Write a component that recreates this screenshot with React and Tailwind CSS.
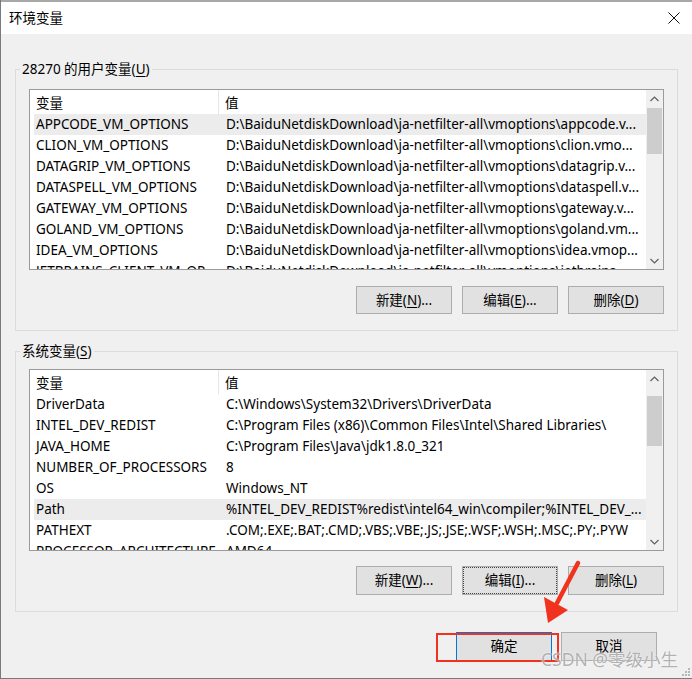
import React from "react";

const userRows = [
  ["APPCODE_VM_OPTIONS", "D:\\BaiduNetdiskDownload\\ja-netfilter-all\\vmoptions\\appcode.v...", true],
  ["CLION_VM_OPTIONS", "D:\\BaiduNetdiskDownload\\ja-netfilter-all\\vmoptions\\clion.vmo..."],
  ["DATAGRIP_VM_OPTIONS", "D:\\BaiduNetdiskDownload\\ja-netfilter-all\\vmoptions\\datagrip.v..."],
  ["DATASPELL_VM_OPTIONS", "D:\\BaiduNetdiskDownload\\ja-netfilter-all\\vmoptions\\dataspell.v..."],
  ["GATEWAY_VM_OPTIONS", "D:\\BaiduNetdiskDownload\\ja-netfilter-all\\vmoptions\\gateway.v..."],
  ["GOLAND_VM_OPTIONS", "D:\\BaiduNetdiskDownload\\ja-netfilter-all\\vmoptions\\goland.vm..."],
  ["IDEA_VM_OPTIONS", "D:\\BaiduNetdiskDownload\\ja-netfilter-all\\vmoptions\\idea.vmop..."],
  ["JETBRAINS_CLIENT_VM_OP...", "D:\\BaiduNetdiskDownload\\ja-netfilter-all\\vmoptions\\jetbrains..."],
];

const sysRows = [
  ["DriverData", "C:\\Windows\\System32\\Drivers\\DriverData"],
  ["INTEL_DEV_REDIST", "C:\\Program Files (x86)\\Common Files\\Intel\\Shared Libraries\\"],
  ["JAVA_HOME", "C:\\Program Files\\Java\\jdk1.8.0_321"],
  ["NUMBER_OF_PROCESSORS", "8"],
  ["OS", "Windows_NT"],
  ["Path", "%INTEL_DEV_REDIST%redist\\intel64_win\\compiler;%INTEL_DEV_...", true],
  ["PATHEXT", ".COM;.EXE;.BAT;.CMD;.VBS;.VBE;.JS;.JSE;.WSF;.WSH;.MSC;.PY;.PYW"],
  ["PROCESSOR_ARCHITECTURE", "AMD64"],
];

function Row({ name, value, sel }) {
  return (
    <div className="h-[21px] shrink-0 pl-[4px] flex leading-[21px]">
      <div className={sel ? "flex flex-1 min-w-0 bg-[#ececec]" : "flex flex-1 min-w-0"}>
        <div className="w-[185px] shrink-0 pl-[2px] overflow-hidden whitespace-nowrap">{name}</div>
        <div className="flex-1 min-w-0 pl-[7px] overflow-hidden whitespace-nowrap">{value}</div>
      </div>
    </div>
  );
}

function Chevron({ up }) {
  return (
    <svg width="9" height="6" viewBox="0 0 9 6" fill="none">
      <path d={up ? "M0.5 5L4.5 1L8.5 5" : "M0.5 1L4.5 5L8.5 1"} stroke="#606060" strokeWidth="1.2" />
    </svg>
  );
}

function ListBox({ rows, thumbTop, thumbH, height }) {
  return (
    <div className={`${height} border border-[#9a9a9a] bg-white flex`}>
      <div className="flex-1 min-w-0 flex flex-col overflow-hidden">
        <div className="h-[24px] shrink-0 flex leading-[26px]">
          <div className="w-[189px] shrink-0 pl-[6px] border-r border-[#e5e5e5]">变量</div>
          <div className="pl-[6px]">值</div>
        </div>
        {rows.map((r, i) => (
          <Row key={i} name={r[0]} value={r[1]} sel={r[2]} />
        ))}
      </div>
      <div className="w-[17px] shrink-0 bg-[#f0f0f0] flex flex-col">
        <div className="h-[17px] shrink-0 flex items-center justify-center">
          <Chevron up />
        </div>
        <div className="flex-1 flex flex-col px-[1px]">
          <div className={`${thumbTop} ${thumbH} bg-[#cdcdcd]`} />
        </div>
        <div className="h-[17px] shrink-0 flex items-center justify-center">
          <Chevron />
        </div>
      </div>
    </div>
  );
}

function Btn({ children, extra = "" }) {
  return (
    <div
      className={`w-[96px] bg-[#e1e1e1] border border-[#adadad] flex items-center justify-center ${extra}`}
    >
      {children}
    </div>
  );
}

function U({ c }) {
  return <span className="underline underline-offset-[2px] decoration-1">{c}</span>;
}

export default function App() {
  return (
    <div className="w-[692px] h-[679px] relative overflow-hidden bg-[#f0f0f0] border-l border-b border-[#7a7a7a] flex flex-col text-[13.5px] text-black font-['Noto_Sans','Noto_Sans_CJK_SC',sans-serif]">
      <div className="h-[2px] shrink-0 bg-[#a8a8a8]" />
      <div className="h-[32px] shrink-0 bg-white flex items-center justify-between pl-[8px] pr-[12px]">
        <span>环境变量</span>
        <svg width="12" height="12" viewBox="0 0 12 12">
          <path d="M0.5 0.5L11.5 11.5M11.5 0.5L0.5 11.5" stroke="#111" strokeWidth="1" />
        </svg>
      </div>

      <div className="flex flex-col px-[14px]">
        <fieldset className="mt-[25px] border border-[#dcdcdc]">
          <legend className="ml-[4px] px-[2px] leading-[20px]">
            28270 的用户变量(<U c="U" />)
          </legend>
          <div className="pt-[10px] px-[13px] pb-[16px] flex flex-col">
            <ListBox rows={userRows} thumbTop="mt-[1px]" thumbH="h-[46px]" height="h-[181px]" />
            <div className="mt-[16px] h-[28px] flex justify-end gap-[10px]">
              <Btn>新建(<U c="N" />)...</Btn>
              <Btn>编辑(<U c="E" />)...</Btn>
              <Btn>删除(<U c="D" />)</Btn>
            </div>
          </div>
        </fieldset>

        <fieldset className="mt-[10px] border border-[#dcdcdc]">
          <legend className="ml-[4px] px-[2px] leading-[20px]">
            系统变量(<U c="S" />)
          </legend>
          <div className="pt-[8px] px-[13px] pb-[16px] flex flex-col">
            <ListBox rows={sysRows} thumbTop="mt-[9px]" thumbH="h-[50px]" height="h-[182px]" />
            <div className="mt-[15px] h-[29px] flex justify-end gap-[10px]">
              <Btn>新建(<U c="W" />)...</Btn>
              <Btn extra="outline-1 outline-dotted outline-[#444] -outline-offset-2">
                编辑(<U c="I" />)...
              </Btn>
              <Btn>删除(<U c="L" />)</Btn>
            </div>
          </div>
        </fieldset>

        <div className="mt-[20px] flex justify-end gap-[9px] pr-[21px]">
          <div className="w-[96px] h-[29px] bg-[#e1e1e1] border border-[#0078d7] flex items-center justify-center">
            确定
          </div>
          <div className="w-[96px] h-[29px] bg-[#e1e1e1] border border-[#adadad] flex items-center justify-center">
            取消
          </div>
        </div>
      </div>

      {/* red annotation rectangle */}
      <div className="absolute left-[435px] top-[633px] w-[123px] h-[29px] border-2 border-[#f0321e]" />

      {/* red arrow */}
      <svg className="absolute left-0 top-0" width="692" height="679" viewBox="0 0 692 679">
        <path d="M577 563 L556 603" stroke="#f0321e" strokeWidth="4.5" strokeLinecap="round" />
        <path d="M543 597 L567 610 L547 623 Z" fill="#f0321e" />
      </svg>

      {/* watermark */}
      <div className="absolute left-[540px] top-[648px] text-[17.5px] leading-[22px] text-[#9a9a9a]/75 whitespace-nowrap [text-shadow:0_0_2px_#ffffff]">
        CSDN @零级小生
      </div>

      {/* resize grip */}
      <svg className="absolute left-[680px] top-[667px]" width="10" height="10" viewBox="0 0 10 10">
        <rect x="7" y="1" width="2" height="2" fill="#b8b8b8" />
        <rect x="4" y="4" width="2" height="2" fill="#b8b8b8" />
        <rect x="7" y="4" width="2" height="2" fill="#b8b8b8" />
        <rect x="1" y="7" width="2" height="2" fill="#b8b8b8" />
        <rect x="4" y="7" width="2" height="2" fill="#b8b8b8" />
        <rect x="7" y="7" width="2" height="2" fill="#b8b8b8" />
      </svg>
    </div>
  );
}
